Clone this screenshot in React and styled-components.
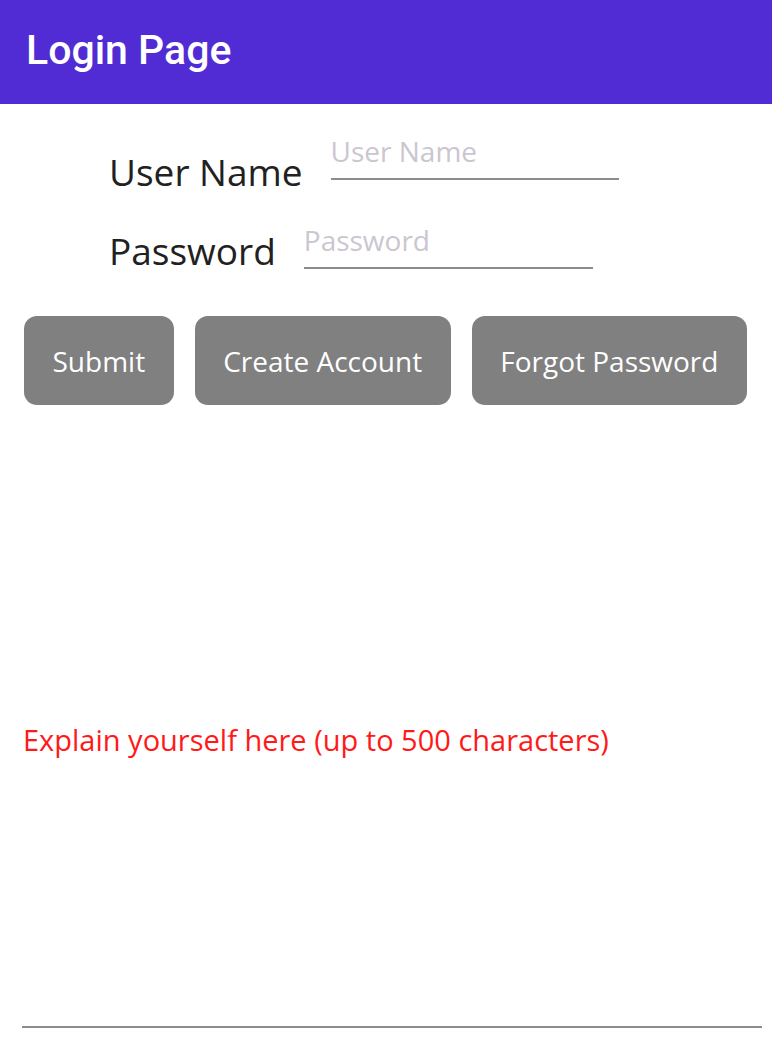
import React from 'react'
import styled, { createGlobalStyle } from 'styled-components'

const GlobalStyle = createGlobalStyle`
  html, body {
    margin: 0;
    padding: 0;
    background: #FFFFFF;
  }
  * {
    box-sizing: border-box;
  }
`

const App = () => (
	<Page>
		<GlobalStyle />
		<Header>
			<Title>Login Page</Title>
		</Header>
		<Form>
			<Row>
				<Label offset={15}>User Name</Label>
				<Entry width={288} placeholder="User Name" />
			</Row>
			<Row>
				<Label offset={5}>Password</Label>
				<Entry width={289} type="password" placeholder="Password" />
			</Row>
		</Form>
		<Buttons>
			<Button>Submit</Button>
			<Button>Create Account</Button>
			<Button>Forgot Password</Button>
		</Buttons>
		<Editor>
			<Hint>Explain yourself here (up to 500 characters)</Hint>
		</Editor>
	</Page>
)
export default App

const Page = styled.div`
  width: 772px;
  height: 1054px;
  overflow: hidden;
  background: #FFFFFF;
  font-family: "Open Sans", "Liberation Sans", sans-serif;
`

const Header = styled.header`
  height: 104px;
  background-color: #512BD4;
  display: flex;
  align-items: center;
  padding-left: 26px;
`

const Title = styled.h1`
  margin: 0;
  font-family: Roboto, "Liberation Sans", sans-serif;
  font-weight: 500;
  font-size: 41px;
  color: #FFFFFF;
  padding-bottom: 4px;
`

const Form = styled.div`
  display: flex;
  flex-direction: column;
  gap: 24px;
  padding: 28px 0 0 109px;
`

const Row = styled.div`
  display: flex;
  align-items: flex-start;
  gap: 28px;
`

const Label = styled.span`
  margin-top: ${({ offset }) => offset}px;
  font-size: 37px;
  line-height: 50px;
  color: #212121;
`

const Entry = styled.input`
  width: ${({ width }) => width}px;
  height: 48px;
  padding: 0 0 8px 0;
  border: none;
  border-bottom: 2px solid #8C8C8C;
  outline: none;
  background: transparent;
  font-family: "Open Sans", "Liberation Sans", sans-serif;
  font-size: 28px;
  line-height: 38px;
  color: #212121;
  &::placeholder {
    color: #CBC6D1;
  }
`

const Buttons = styled.div`
  display: flex;
  gap: 21px;
  padding: 40px 24px 0 24px;
`

const Button = styled.button`
  height: 89px;
  padding: 0 28.5px;
  border: none;
  border-radius: 13px;
  background-color: #808080;
  color: #FFFFFF;
  font-family: "Open Sans", "Liberation Sans", sans-serif;
  font-size: 28px;
  cursor: pointer;
`

const Editor = styled.div`
  height: 578px;
  margin: 45px 10px 0 22px;
  padding-top: 4px;
  display: flex;
  align-items: center;
  border-bottom: 2px solid #8C8C8C;
`

const Hint = styled.span`
  font-size: 29px;
  line-height: 38px;
  color: #FF1A1A;
  padding-left: 1px;
`
